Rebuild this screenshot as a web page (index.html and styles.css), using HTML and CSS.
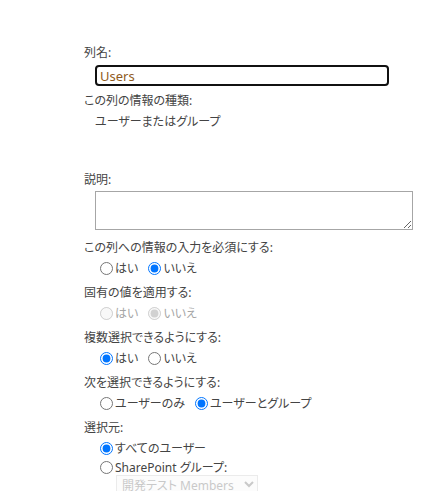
FILE: index.html
```html
<!DOCTYPE html>
<html lang="ja">
<head>
<meta charset="utf-8">
<link rel="stylesheet" href="styles.css">
</head>
<body>
<div class="form">
  <div class="label">列名:</div>
  <input class="name" type="text" value="Users">
  <div class="label l-type">この列の情報の種類:</div>
  <div class="value">ユーザーまたはグループ</div>
  <div class="label l-desc">説明:</div>
  <textarea class="desc"></textarea>

  <div class="label l-first">この列への情報の入力を必須にする:</div>
  <div class="radios">
    <label class="opt"><input type="radio" name="req">はい</label>
    <label class="opt"><input type="radio" name="req" checked>いいえ</label>
  </div>

  <div class="label">固有の値を適用する:</div>
  <div class="radios disabled">
    <label class="opt"><input type="radio" name="uniq" disabled>はい</label>
    <label class="opt"><input type="radio" name="uniq" checked disabled>いいえ</label>
  </div>

  <div class="label">複数選択できるようにする:</div>
  <div class="radios">
    <label class="opt"><input type="radio" name="multi" checked>はい</label>
    <label class="opt"><input type="radio" name="multi">いいえ</label>
  </div>

  <div class="label">次を選択できるようにする:</div>
  <div class="radios">
    <label class="opt"><input type="radio" name="kind">ユーザーのみ</label>
    <label class="opt"><input type="radio" name="kind" checked>ユーザーとグループ</label>
  </div>

  <div class="label">選択元:</div>
  <div class="radios stack">
    <label class="opt"><input type="radio" name="src" checked>すべてのユーザー</label>
  </div>
  <div class="radios stack last">
    <label class="opt"><input type="radio" name="src">SharePoint グループ:</label>
  </div>
  <select class="group" disabled>
    <option>開発テスト Members</option>
  </select>
</div>
</body>
</html>
```

FILE: styles.css
```css
html, body {
  margin: 0;
  padding: 0;
  background: #ffffff;
}

body {
  font-family: "Noto Sans", "Noto Sans CJK JP", sans-serif;
  font-size: 12px;
  color: #444444;
  font-feature-settings: "palt";
}

.form {
  padding: 42px 0 0 84px;
}

.label {
  height: 22px;
  line-height: 22px;
  white-space: nowrap;
}

.name {
  display: block;
  box-sizing: border-box;
  margin: 1px 0 0 11px;
  width: 294px;
  height: 21px;
  border: 2px solid #111111;
  border-radius: 4px;
  padding: 0 3px;
  font-family: "Noto Sans", "Noto Sans CJK JP", sans-serif;
  font-size: 13px;
  color: #8f5a1c;
  outline: none;
}

.l-type {
  margin-top: 4px;
}

.value {
  height: 20px;
  line-height: 20px;
  padding-left: 11px;
}

.l-desc {
  margin-top: 37px;
}

.desc {
  display: block;
  box-sizing: border-box;
  margin: 0 0 0 11px;
  width: 318px;
  height: 39px;
  border: 1px solid #a6a6a6;
  border-radius: 0;
  padding: 2px 4px;
  font-family: inherit;
  font-size: 12px;
}

.l-first {
  margin-top: 7px;
}

.radios {
  display: flex;
  align-items: flex-start;
  box-sizing: border-box;
  height: 23px;
  padding: 3px 0 0 16px;
}

.radios.stack {
  height: 19px;
}

.radios.stack.last {
  height: 17px;
}

.opt {
  display: flex;
  align-items: center;
  height: 13px;
  line-height: 13px;
  margin-right: 10px;
  white-space: nowrap;
}

.opt input {
  width: 13px;
  height: 13px;
  margin: 0 2px 0 0;
}

.radios.disabled .opt {
  color: #a6a6a6;
}

.group {
  display: block;
  box-sizing: border-box;
  margin-left: 32px;
  width: 142px;
  height: 19px;
  padding: 0 1px;
  border: 1px solid #e3e3e3;
  border-radius: 0;
  background: #fbfbfb;
  color: #b3b3b3;
  font-family: "Noto Sans", "Noto Sans CJK JP", sans-serif;
  font-size: 12px;
  font-feature-settings: "palt";
}
```
